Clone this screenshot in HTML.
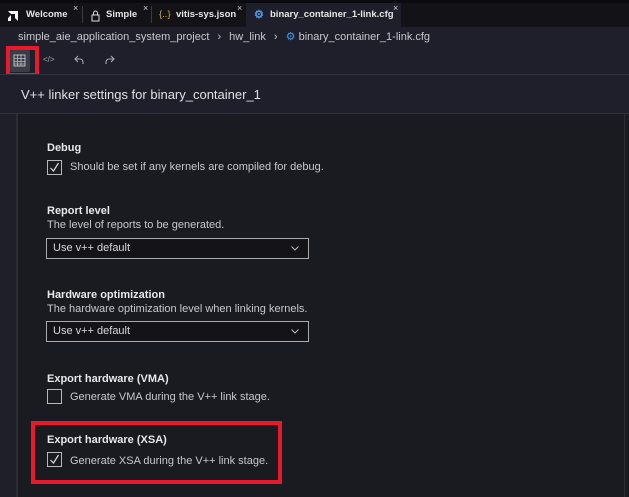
<!DOCTYPE html>
<html><head><meta charset="utf-8"><style>
*{margin:0;padding:0;box-sizing:border-box}
body{width:629px;height:497px;overflow:hidden;background:#1a1a21;font-family:"Liberation Sans",sans-serif;color:#d4d4d8;position:relative}
.abs{position:absolute}
.tabbar{left:0;top:0;width:629px;height:27px;background:#121217;border-top:3px solid #0b0b0f}
.tab{position:absolute;top:3px;height:24px;font-size:9.5px;font-weight:bold;color:#e6e6e6;line-height:24px;white-space:nowrap}
.tab .x{position:absolute;top:-7px;font-weight:normal;font-size:9px;color:#ccc}
.sep{position:absolute;top:6px;width:1px;height:17px;background:#3a3a44}
.bc{left:0;top:27px;width:629px;height:47px;background:#1f1f2b}
.line{height:1px;background:#30313c;left:0;width:629px}
.hdr{left:0;top:75px;width:629px;height:38px;background:#1f1f2b;font-size:13px;color:#e0e0e4;padding:12px 0 0 21px}
.strip{left:0;top:114px;width:18px;height:383px;background:#1f1f29;border-right:2px solid #2c2d37}
.lbl{font-size:11px;font-weight:bold;color:#e8e8ea;left:47px;white-space:nowrap}
.desc{font-size:11px;color:#c8c8cc;left:47px;white-space:nowrap}
.cb{width:15px;height:15px;border:1px solid #b8b8bc;left:47px}
.sel{left:46px;width:263px;height:21px;border:1px solid #a9a9ae;background:#131318;font-size:11px;color:#d8d8dc;padding:3px 0 0 6px}
.red{border:4px solid #e8192c}
</style></head><body>
<div class="abs tabbar"></div>
<svg class="abs" style="left:7px;top:10px" width="12" height="12" viewBox="0 0 12 12"><path d="M1 1h10v10l-3-3V4H4z" fill="#fff"/><path d="M1 8l3-3v6H1z" fill="#fff"/></svg>
<div class="tab" style="left:26px">Welcome</div><div class="tab" style="left:73px"><span class="x" style="left:0">×</span></div>
<div class="sep" style="left:82px"></div>
<svg class="abs" style="left:91px;top:10px" width="9" height="12" viewBox="0 0 9 12"><rect x="1" y="5" width="7" height="6" fill="none" stroke="#ddd"/><path d="M2.5 5V3a2 2 0 0 1 4 0v2" fill="none" stroke="#ddd"/></svg>
<div class="tab" style="left:106px">Simple</div><div class="tab" style="left:143px"><span class="x" style="left:0">×</span></div>
<div class="sep" style="left:151px"></div>
<div class="tab" style="left:159px;color:#d9a927;font-weight:normal">{..}</div>
<div class="tab" style="left:176px">vitis-sys.json</div><div class="tab" style="left:237px"><span class="x" style="left:0">×</span></div>
<div class="abs" style="left:246px;top:3px;width:155px;height:24px;background:#1f1f2b"></div>
<div class="tab" style="left:254px;color:#4a9be8;font-size:11px">⚙</div>
<div class="tab" style="left:270px">binary_container_1-link.cfg</div><div class="tab" style="left:393px"><span class="x" style="left:0">×</span></div>
<div class="abs bc"></div>
<div class="abs" style="left:18px;top:30px;font-size:11px;color:#c8c8cc;white-space:nowrap">simple_aie_application_system_project <span style="margin:0 5px">›</span> hw_link <span style="margin:0 5px">›</span> <span style="color:#4a9be8">⚙</span> binary_container_1-link.cfg</div>
<div class="abs" style="left:10px;top:50px;width:20px;height:22px;background:#3a3c48;border-radius:2px"></div>
<svg class="abs" style="left:13px;top:54px" width="13" height="13" viewBox="0 0 13 13"><rect x="1" y="1" width="11" height="11" fill="none" stroke="#bbb"/><path d="M1 4.5h11M1 7.5h11M1 10h11M4.5 1v11M8 1v11" stroke="#bbb" stroke-width=".8"/></svg>
<div class="abs" style="left:43px;top:55px;font-size:8px;color:#aaa">&lt;/&gt;</div>
<svg class="abs" style="left:74px;top:55px" width="10" height="10" viewBox="0 0 10 10"><path d="M4 1L1 4l3 3M1 4h5a3 3 0 0 1 3 3v2" fill="none" stroke="#aaa" stroke-width="1.1"/></svg>
<svg class="abs" style="left:105px;top:55px" width="10" height="10" viewBox="0 0 10 10"><path d="M6 1l3 3-3 3M9 4H4a3 3 0 0 0-3 3v2" fill="none" stroke="#aaa" stroke-width="1.1"/></svg>
<div class="abs red" style="left:6px;top:46px;width:33px;height:31px"></div>
<div class="abs line" style="top:74px"></div>
<div class="abs hdr">V++ linker settings for binary_container_1</div>
<div class="abs line" style="top:113px"></div>
<div class="abs strip"></div>
<div class="abs" style="left:624px;top:114px;width:1px;height:383px;background:#2c2d37"></div>

<div class="abs lbl" style="top:142px">Debug</div>
<div class="abs cb" style="top:160px"></div><svg class="abs" style="left:49px;top:162px" width="11" height="11" viewBox="0 0 11 11"><path d="M1.5 6l3 3 5-8" fill="none" stroke="#ddd" stroke-width="1.2"/></svg>
<div class="abs desc" style="left:70px;top:161px">Should be set if any kernels are compiled for debug.</div>

<div class="abs lbl" style="top:205px">Report level</div>
<div class="abs desc" style="top:219px">The level of reports to be generated.</div>
<div class="abs sel" style="top:238px">Use v++ default<svg style="position:absolute;right:9px;top:7px" width="8" height="5" viewBox="0 0 8 5"><path d="M.5.5L4 4 7.5.5" fill="none" stroke="#bbb"/></svg></div>

<div class="abs lbl" style="top:289px">Hardware optimization</div>
<div class="abs desc" style="top:303px">The hardware optimization level when linking kernels.</div>
<div class="abs sel" style="top:321px">Use v++ default<svg style="position:absolute;right:9px;top:7px" width="8" height="5" viewBox="0 0 8 5"><path d="M.5.5L4 4 7.5.5" fill="none" stroke="#bbb"/></svg></div>

<div class="abs lbl" style="top:373px">Export hardware (VMA)</div>
<div class="abs cb" style="top:389px"></div>
<div class="abs desc" style="left:70px;top:391px">Generate VMA during the V++ link stage.</div>

<div class="abs red" style="left:31px;top:421px;width:251px;height:63px"></div>
<div class="abs lbl" style="top:434px">Export hardware (XSA)</div>
<div class="abs cb" style="top:452px"></div><svg class="abs" style="left:49px;top:454px" width="11" height="11" viewBox="0 0 11 11"><path d="M1.5 6l3 3 5-8" fill="none" stroke="#ddd" stroke-width="1.2"/></svg>
<div class="abs desc" style="left:70px;top:455px">Generate XSA during the V++ link stage.</div>
</body></html>
